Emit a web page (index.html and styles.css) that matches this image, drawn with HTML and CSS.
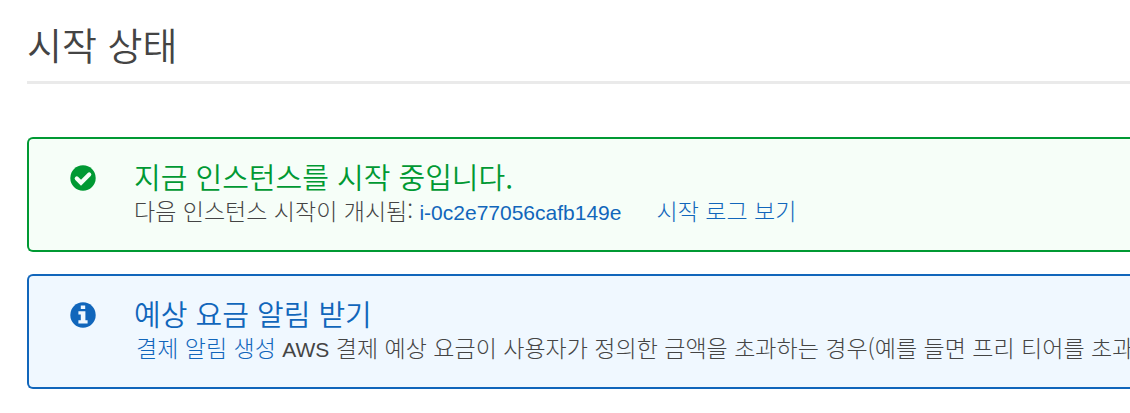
FILE: index.html
```html
<!DOCTYPE html>
<html lang="ko">
<head>
<meta charset="utf-8">
<title>시작 상태</title>
<link rel="stylesheet" href="styles.css">
</head>
<body>
<main class="page">
  <h1 class="page-title">시작 상태</h1>
  <section class="alert alert-success">
    <svg class="alert-icon" viewBox="0 0 26 26" aria-hidden="true">
      <circle cx="13" cy="13" r="12.7" fill="currentColor"/>
      <path d="M6.8 13.6l4.2 4.2 8.2-8.2" fill="none" stroke="#f6fef8" stroke-width="4.2" stroke-linejoin="miter" stroke-linecap="round"/>
    </svg>
    <div class="alert-body">
      <h2 class="alert-title">지금 인스턴스를 시작 중입니다.</h2>
      <p class="alert-text">다음 인스턴스 시작이 개시됨: <a class="latin" href="#instance">i-0c2e77056cafb149e</a><a class="log-link" href="#log">시작 로그 보기</a></p>
    </div>
  </section>
  <section class="alert alert-info">
    <svg class="alert-icon" viewBox="0 0 26 26" aria-hidden="true">
      <circle cx="13" cy="13" r="12.7" fill="currentColor"/>
      <path d="M10.8 3.4h4.4v3.6h-4.4zM8.4 9.2h7v9h2.2v3.4H8.4v-3.4h2.4v-5.6H8.4z" fill="#f0f8ff"/>
    </svg>
    <div class="alert-body">
      <h2 class="alert-title">예상 요금 알림 받기</h2>
      <p class="alert-text"><a class="alarm-link" href="#alarm">결제 알림 생성</a> <span class="latin">AWS</span> 결제 예상 요금이 사용자가 정의한 금액을 초과하는 경우(예를 들면 프리 티어를 초과하는 경우)</p>
    </div>
  </section>
</main>
</body>
</html>
```

FILE: styles.css
```css
* { box-sizing: border-box; }
body {
  margin: 0;
  background: #fff;
  color: #444;
  font-family: "Noto Sans CJK KR", "Liberation Sans", sans-serif;
  font-weight: 300;
}
.page {
  padding: 18px 0 24px 27px;
  overflow: hidden;
}
.page-title {
  margin: 0 0 53px;
  padding-bottom: 11px;
  border-bottom: 3px solid #eaeaea;
  font-size: 38px;
  font-weight: 350;
  line-height: 52px;
}
.alert {
  display: flex;
  gap: 38px;
  margin-bottom: 22px;
  padding: 20px 0 23px 41px;
  border: 2px solid currentColor;
  border-right: 0;
  border-radius: 6px 0 0 6px;
}
.alert:last-child { margin-bottom: 0; }
.alert-success { color: #093; background: #f6fef8; }
.alert-info { color: #1166bb; background: #f0f8ff; }
.alert-icon {
  flex: none;
  width: 26px;
  height: 26px;
  margin-top: 6px;
}
.alert-body { flex: 1; min-width: 0; }
.alert-title {
  margin: 0;
  font-size: 29px;
  font-weight: 350;
  line-height: 35px;
}
.alert-text {
  margin: 0;
  color: #444;
  font-size: 23px;
  line-height: 33px;
  white-space: nowrap;
}
.alert-text a { color: #1166bb; text-decoration: none; }
.latin {
  font-family: "Liberation Sans", sans-serif;
  font-size: 21px;
  font-weight: 400;
  line-height: 1;
}
.log-link { margin-left: 35px; }
.alarm-link { margin-left: 2px; }
```
